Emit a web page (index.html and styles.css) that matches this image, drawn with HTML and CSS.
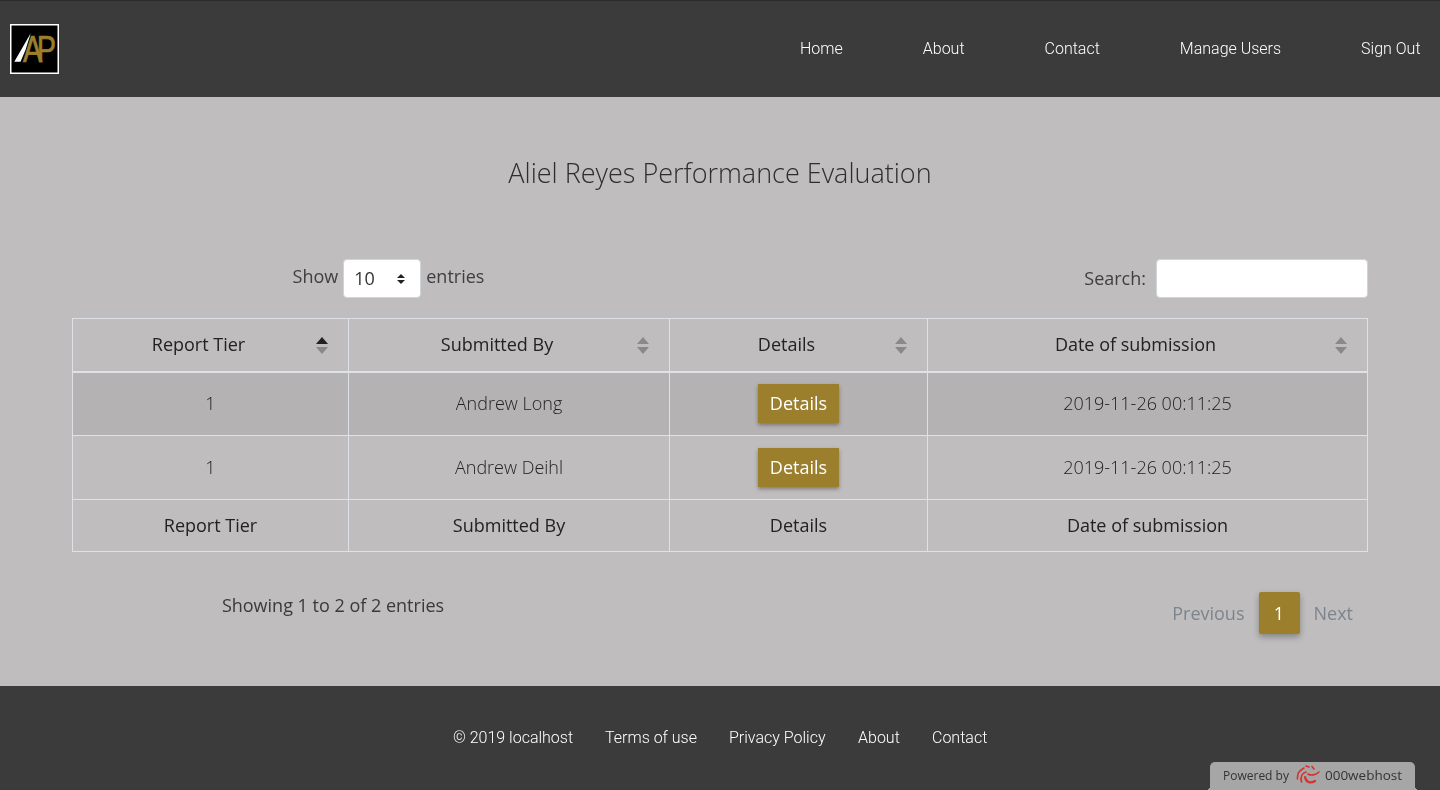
FILE: index.html
```html
<!DOCTYPE html>
<html lang="en">
<head>
    <meta charset="UTF-8">
    <meta name="viewport" content="width=device-width, initial-scale=1.0">
    <title>Performance Evaluation</title>
    <link rel="stylesheet" href="styles.css">
</head>
<body>

<header class="topbar">
    <a class="logo" href="#">
        <svg width="49" height="50" viewBox="0 0 49 50">
            <rect x="0.75" y="0.75" width="47.5" height="48.5" fill="#000" stroke="#fff" stroke-width="1.5"/>
            <polygon points="4.3,37.7 20.7,9.3 15.5,26 10.5,37.7" fill="#fff"/>
            <text class="logo-text" transform="translate(13 37.7) scale(0.78 1)">AP</text>
        </svg>
    </a>
    <nav class="topnav">
        <a href="#">Home</a>
        <a href="#">About</a>
        <a href="#">Contact</a>
        <a href="#">Manage Users</a>
        <a href="#">Sign Out</a>
    </nav>
</header>

<main class="content">
    <h2 class="page-title">Aliel Reyes Performance Evaluation</h2>

    <div class="controls">
        <div class="length">
            <span>Show</span>
            <span class="select-box">10
                <svg width="8" height="10" viewBox="0 0 8 10"><path d="M4 0 L8 4 H0 Z M0 6 H8 L4 10 Z" fill="#222"/></svg>
            </span>
            <span>entries</span>
        </div>
        <div class="search">
            <label for="search">Search:</label>
            <input id="search" type="text">
        </div>
    </div>

    <table class="report-table">
        <colgroup>
            <col class="col-tier">
            <col class="col-by">
            <col class="col-details">
            <col class="col-date">
        </colgroup>
        <thead>
            <tr>
                <th><span class="th-label">Report Tier</span><span class="sort asc"></span></th>
                <th><span class="th-label">Submitted By</span><span class="sort"></span></th>
                <th><span class="th-label">Details</span><span class="sort"></span></th>
                <th><span class="th-label">Date of submission</span><span class="sort"></span></th>
            </tr>
        </thead>
        <tbody>
            <tr class="odd">
                <td>1</td>
                <td>Andrew Long</td>
                <td><a class="btn" href="#">Details</a></td>
                <td>2019-11-26 00:11:25</td>
            </tr>
            <tr>
                <td>1</td>
                <td>Andrew Deihl</td>
                <td><a class="btn" href="#">Details</a></td>
                <td>2019-11-26 00:11:25</td>
            </tr>
        </tbody>
        <tfoot>
            <tr>
                <th>Report Tier</th>
                <th>Submitted By</th>
                <th>Details</th>
                <th>Date of submission</th>
            </tr>
        </tfoot>
    </table>

    <div class="table-bottom">
        <div class="info">Showing 1 to 2 of 2 entries</div>
        <div class="pager">
            <a href="#">Previous</a>
            <a class="current" href="#">1</a>
            <a href="#">Next</a>
        </div>
    </div>
</main>

<footer class="bottombar">
    <span>© 2019 localhost</span>
    <a href="#">Terms of use</a>
    <a href="#">Privacy Policy</a>
    <a href="#">About</a>
    <a href="#">Contact</a>
    <div class="powered">
        <span>Powered by</span>
        <svg width="24" height="20" viewBox="0 0 24 20" fill="none" stroke="#d8312c" stroke-linecap="round">
            <path d="M1.5 14 C1 9 4 5 8 3" stroke-width="1.6"/>
            <path d="M5.5 17 C4 12 6 8 10 7" stroke-width="1.6"/>
            <path d="M9 12 C10 17 14 19 19 16" stroke-width="2.2"/>
            <path d="M12 9 C15 11 20 10 23 7" stroke-width="1.6"/>
            <path d="M10 1 L13 2" stroke-width="1.6"/>
            <path d="M16 1.5 L18 4" stroke-width="1.6"/>
        </svg>
        <span class="host">000webhost</span>
    </div>
</footer>

</body>
</html>
```

FILE: styles.css
```css
* {
    box-sizing: border-box;
}
html, body {
    height: 100%;
}
body {
    margin: 0;
    height: 790px;
    overflow: hidden;
    display: flex;
    flex-direction: column;
    font-family: "Open Sans", sans-serif;
    font-size: 18px;
    color: #3a3a3a;
    background: #bfbdbd;
}
a {
    text-decoration: none;
}
/* own layers, so the text is smoothed in grey */
.content, .topnav, .bottombar > * {
    will-change: transform;
}

/* top bar */
.topbar {
    height: 97px;
    flex: none;
    display: flex;
    align-items: center;
    justify-content: space-between;
    background: #3b3b3b;
    border-top: 1px solid #2b2b2b;
    padding: 0 19px 0 10px;
}
.logo {
    display: block;
    height: 50px;
}
.logo-text {
    font-family: "Liberation Sans", sans-serif;
    font-size: 37px;
    letter-spacing: -7px;
    fill: #9b7f2c;
    stroke: #9b7f2c;
    stroke-width: 0.7px;
}
.topnav {
    display: flex;
    gap: 80px;
    margin-top: -2px;
}
.topnav a {
    font-family: Roboto, sans-serif;
    font-weight: 300;
    font-size: 16px;
    color: #fff;
}

/* main */
.content {
    flex: 1;
    padding: 0 72px;
}
.page-title {
    margin: 0;
    padding-top: 57px;
    height: 162px;
    text-align: center;
    font-weight: 300;
    font-size: 27px;
    line-height: 37px;
    color: #2e2e2e;
}
.controls {
    display: flex;
    height: 59px;
}
.length {
    width: 633px;
    display: flex;
    justify-content: center;
    align-items: flex-start;
    gap: 5px;
    line-height: 35px;
    color: #3f3f3f;
}
.select-box {
    width: 78px;
    height: 39px;
    display: flex;
    align-items: center;
    justify-content: space-between;
    padding: 0 15px 0 10px;
    background: #fff;
    border: 1px solid #ced4da;
    border-radius: 4px;
    color: #333;
}
.search {
    flex: 1;
    display: flex;
    justify-content: flex-end;
    gap: 10px;
    line-height: 39px;
    color: #3f3f3f;
}
.search input {
    width: 212px;
    height: 39px;
    background: #fff;
    border: 1px solid #ced4da;
    border-radius: 4px;
}

/* table */
.report-table {
    width: 1296px;
    table-layout: fixed;
    border-collapse: collapse;
    color: #333;
}
.col-tier { width: 276px; }
.col-by { width: 321px; }
.col-details { width: 258px; }
.report-table th, .report-table td {
    border: 1px solid #dee2e6;
    text-align: center;
    font-size: 18px;
    padding: 0 0 2px;
}
.report-table th {
    font-weight: 400;
    color: #222;
}
.report-table thead th {
    height: 53px;
    border-bottom-width: 2px;
    position: relative;
    padding: 0 24px 2px 0;
}
.report-table td {
    height: 64px;
    font-weight: 300;
    color: #222;
}
.report-table tfoot th {
    height: 52px;
}
.odd {
    background: #b4b2b2;
}
.sort {
    position: absolute;
    right: 19px;
    top: 18px;
    width: 13px;
    height: 17px;
}
.sort::before, .sort::after {
    content: "";
    position: absolute;
    left: 0;
    border-left: 6.5px solid transparent;
    border-right: 6.5px solid transparent;
}
.sort::before {
    top: 0;
    border-bottom: 7px solid #8a8888;
}
.sort::after {
    bottom: 0;
    border-top: 7px solid #8a8888;
}
.sort.asc::before {
    border-bottom-color: #222;
}
.btn {
    display: inline-block;
    width: 81px;
    height: 39px;
    margin-top: 2px;
    line-height: 38px;
    background: #9b7f2c;
    color: #fff;
    font-weight: 400;
    text-align: center;
    box-shadow: 0 2px 4px rgba(0, 0, 0, 0.35);
    vertical-align: middle;
}

/* below the table */
.table-bottom {
    display: flex;
    justify-content: space-between;
    padding-top: 40px;
}
.info {
    width: 522px;
    text-align: center;
    line-height: 26px;
    color: #3a3a3a;
}
.pager {
    display: flex;
    align-items: center;
    height: 42px;
    padding-right: 1px;
}
.pager a {
    color: #7c858d;
    padding: 0 14px;
}
.pager a.current {
    width: 41px;
    height: 42px;
    line-height: 42px;
    padding: 0;
    text-align: center;
    background: #9b7f2c;
    color: #fff;
    border-radius: 2px;
    box-shadow: 0 3px 6px rgba(0, 0, 0, 0.3);
}

/* footer */
.bottombar {
    height: 104px;
    flex: none;
    position: relative;
    display: flex;
    justify-content: center;
    gap: 32px;
    padding-top: 42px;
    background: #3b3b3b;
    font-family: Roboto, sans-serif;
    font-weight: 300;
    font-size: 16px;
    line-height: 19px;
    color: #fff;
}
.bottombar a {
    color: #fff;
}
.powered {
    position: absolute;
    left: 1210px;
    bottom: 0;
    width: 205px;
    height: 28px;
    display: flex;
    align-items: center;
    gap: 7px;
    padding: 0 0 2px 13px;
    background: #a6a6a6;
    border-radius: 5px 5px 0 0;
    font-family: "Open Sans", sans-serif;
    font-weight: 400;
    font-size: 12px;
    color: #333;
}
.powered::before, .powered::after {
    content: "";
    position: absolute;
    bottom: 0;
    width: 4px;
    height: 4px;
}
.powered::before {
    left: -4px;
    background: radial-gradient(circle at 0 0, transparent 4px, #a6a6a6 4px);
}
.powered::after {
    right: -4px;
    background: radial-gradient(circle at 100% 0, transparent 4px, #a6a6a6 4px);
}
.powered .host {
    font-size: 13.5px;
    margin-left: -2px;
}
```
